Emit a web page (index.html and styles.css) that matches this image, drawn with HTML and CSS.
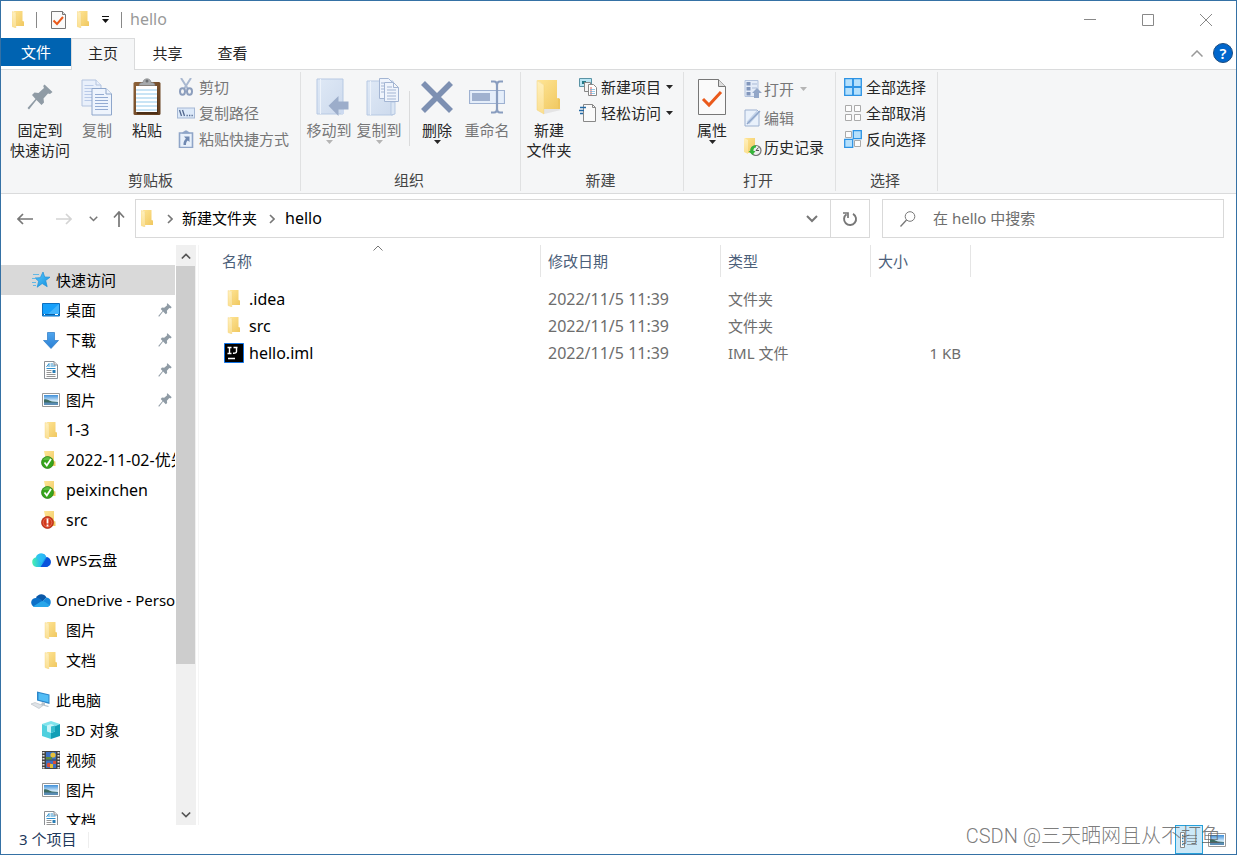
FILE: index.html
```html
<!DOCTYPE html>
<html lang="zh-CN">
<head>
<meta charset="utf-8">
<title>hello</title>
<link rel="stylesheet" href="styles.css">
</head>
<body>
<svg class="sprite" aria-hidden="true">
  <defs>
    <linearGradient id="gFold" x1="0" y1="0" x2="1" y2="1"><stop offset="0" stop-color="#ffe596"/><stop offset="1" stop-color="#f0c860"/></linearGradient>
    <linearGradient id="gFlap" x1="0" y1="0" x2="0" y2="1"><stop offset="0" stop-color="#fff0bd"/><stop offset="1" stop-color="#fbdf90"/></linearGradient>
    <linearGradient id="gBlue" x1="0" y1="0" x2="1" y2="1"><stop offset="0" stop-color="#5cc8fb"/><stop offset="1" stop-color="#1090e0"/></linearGradient>
    <linearGradient id="gDown" x1="0" y1="0" x2="0" y2="1"><stop offset="0" stop-color="#4ea5ee"/><stop offset="1" stop-color="#2b80d4"/></linearGradient>
    <linearGradient id="gBook" x1="0" y1="0" x2="1" y2="1"><stop offset="0" stop-color="#dfe9f6"/><stop offset="1" stop-color="#cddaed"/></linearGradient>
    <linearGradient id="gSky" x1="0" y1="0" x2="0" y2="1"><stop offset="0" stop-color="#3f8fd8"/><stop offset=".6" stop-color="#d4ebfa"/><stop offset="1" stop-color="#e8f4fb"/></linearGradient>
    <linearGradient id="gWood" x1="0" y1="0" x2="1" y2="1"><stop offset="0" stop-color="#8e6239"/><stop offset="1" stop-color="#5f3b1d"/></linearGradient>
    <linearGradient id="gWps" x1="0" y1="0" x2="1" y2="0"><stop offset="0" stop-color="#4bf0b0"/><stop offset=".5" stop-color="#20b5f0"/><stop offset="1" stop-color="#0a50d8"/></linearGradient>
  </defs>
  <symbol id="folder" viewBox="0 0 12 17"><path d="M1 0h9.500v10l1.500.5V15H4V2z" fill="url(#gFold)"/><path d="M0 .5 3.800 2v15L0 15.500z" fill="url(#gFlap)" stroke="#f3d27a" stroke-width=".4"/></symbol>
  <symbol id="bigfolder" viewBox="0 0 26 36"><path d="M1 1h20v18l3 1v10H8V6z" fill="url(#gFold)"/><path d="m22 19 2 1v10h-2z" fill="#eec65e"/><path d="M1 1.500 8 6v29l-7-4z" fill="url(#gFlap)" stroke="#f3d27a" stroke-width=".5"/><path d="m8 35 17-4-2-1H8z" fill="#d8d8d8" opacity=".6"/></symbol>
  <symbol id="prop" viewBox="0 0 28 36"><path d="M.5.5h20l7 7v28H.5z" fill="#fafafa" stroke="#777"/><path d="M20.500.5v7h7" fill="#ddd" stroke="#777"/><path d="m5 20 6 6 12-13" fill="none" stroke="#ea5a1c" stroke-width="3"/></symbol>
  <symbol id="miniprop" viewBox="0 0 15 18"><path d="M.5.500h11l3 3v14H.5z" fill="#fafafa" stroke="#777"/><path d="M11.500.5v3h3" fill="#ddd" stroke="#777"/><path d="m2.500 9.500 3.500 3.500 6-7" fill="none" stroke="#ea5a1c" stroke-width="2"/></symbol>
  <symbol id="pin" viewBox="0 0 26 26"><path d="M17.500.5 25.500 8l-2.500 2-2-.5-4.500 5 .5 4-2.500 2.500L9.500 16 2 25.500.5 24 8.500 15 5 11l2.500-2.500 4 .5 5.500-5-.8-2z" fill="#8f9ba5"/></symbol>
  <symbol id="copy" viewBox="0 0 32 37"><g fill="#e9f0fb" stroke="#b4c4df"><path d="M1 1h14l5 5v21H1z"/><path d="M15 1v5h5"/></g><g stroke="#b9cae8"><path d="M3.500 6.500h9M3.500 9.500h13M3.500 12.500h13M3.500 15.500h13M3.500 18.500h13M3.500 21.500h13"/></g><g fill="#eef4fd" stroke="#8ea6cb"><path d="M11 9.500h14l5.500 5.500v21H11z"/><path d="M25 9.500V15h5.500"/></g><path d="M14 15.500h9M14 18.500h13M14 21.500h13M14 24.500h13M14 27.500h13M14 30.500h13" stroke="#93abd2"/></symbol>
  <symbol id="paste" viewBox="0 0 28 38"><rect x=".5" y="4" width="27" height="33" rx="1.500" fill="url(#gWood)"/><path d="m24 9 1 27H4v-2h20z" fill="#4c2f17"/><path d="M3 8h21v26H3z" fill="#fff"/><path d="M3 12h21M3 16h21M3 20h21M3 24h21M3 28h21M3 32h21" stroke="#b8dcf2" stroke-width="1.300"/><path d="M6 7.500C6 5 8 4.500 10 4.500c0-5 8-5 8 0 2 0 4 .5 4 3z" fill="#a6a9ac" stroke="#7d8082" stroke-width=".6"/><circle cx="14" cy="3" r="1.500" fill="#6c6f71"/></symbol>
  <symbol id="cut" viewBox="0 0 18 18"><path d="m4 0 7 11M14 0 7 11" stroke="#a9b8d0" stroke-width="2"/><g fill="none" stroke="#8c9ebd" stroke-width="2"><ellipse cx="5.500" cy="13.500" rx="2.500" ry="3.200"/><ellipse cx="12.500" cy="13.500" rx="2.500" ry="3.200"/></g></symbol>
  <symbol id="path" viewBox="0 0 18 18"><rect x=".5" y="4" width="17" height="10" fill="#dce9f9" stroke="#a6b8d5"/><path d="m2.500 6 2 6M5.500 6l2 6" stroke="#52688f" stroke-width="1.300"/><path d="M9.500 11.500h1.300M12 11.500h1.300M14.500 11.500h1.300" stroke="#52688f" stroke-width="1.400"/></symbol>
  <symbol id="shortcut" viewBox="0 0 18 18"><path d="M2.500 3h13v14.500h-13z" fill="#e9f1fb" stroke="#8fa5c8" stroke-width="1.600"/><path d="M5 3.500C6 1 7 2 8 .5h2C11 2 12 1 13 3.500z" fill="#8fa5c8"/><path d="M7 6.500h5.500V12l-1.600-1.600c-1.500 1-2 2.500-1.900 4.600H6.500c-.3-3 1-5 2.400-6.200z" fill="#7089b2"/></symbol>
  <symbol id="moveto" viewBox="0 0 33 38"><path d="M1 1h26v35H1z" fill="url(#gBook)" stroke="#b7c9e3"/><path d="M4.500 1v35" stroke="#edf3fb"/><path d="M25 24h3v12h-3z" fill="#cddaf0"/><path d="M22.500 18v5.500H32.500v8h-10V38L12.500 27.800z" fill="#9cadca"/></symbol>
  <symbol id="copyto" viewBox="0 0 33 38"><path d="M1 3h26v34H1z" fill="url(#gBook)" stroke="#b7c9e3"/><path d="M4.500 3v34" stroke="#edf3fb"/><path d="M25 24h4v12l-4 1z" fill="#dbe6f4" stroke="#b7c9e3"/><g fill="#eff4fc" stroke="#a3b5d3"><path d="M13.500.5h9l5 5v15h-14z"/><path d="M18.500 4.500h9l5 5v14h-14zM27.500 4.500v5h5"/></g><path d="M15 5h3M15 8h3M15 11h3M15 14h3M21 9h5M21 12h9M21 15h9M21 18h9M21 21h9" stroke="#a3b5d3"/></symbol>
  <symbol id="del" viewBox="0 0 32 32"><path d="m2 2 28 28M30 2 2 30" stroke="#7d90b2" stroke-width="5.600"/></symbol>
  <symbol id="rename" viewBox="0 0 36 34"><path d="M.5 10.500h35v13H.5z" fill="#e5eefa" stroke="#9eb1d1" stroke-width="1.200"/><path d="M3 13h18v8H3z" fill="#a0b1cf"/><path d="M22 1.500h3q3 0 3 4v23q0 4-3 4h-3M34 1.500h-3q-3 0-3 4v23q0 4 3 4h3" fill="none" stroke="#899dbf" stroke-width="2.200"/></symbol>
  <symbol id="newitem" viewBox="0 0 18 18"><path d="M.5.5h12v8H.5z" fill="#b9e6f5" stroke="#5a93a5"/><path d="M3 3h4v3H3z" fill="#247a88"/><path d="M5.500 4.500h6v9h-6z" fill="#f4f4f4" stroke="#888"/><path d="M9.500 6.500h5l3 3v8h-8z" fill="#fff" stroke="#888"/><path d="M12 9v8" stroke="#e35d54"/><path d="M11 11.500h5M11 13.500h5M11 15.500h5" stroke="#6bb0d8" stroke-width=".7"/></symbol>
  <symbol id="easy" viewBox="0 0 18 18"><path d="M4.500.5h9l3 3v14h-12z" fill="#fafafa" stroke="#888"/><path d="M13.500.5v3h3" fill="none" stroke="#888"/><path d="M1 3.500h6M0 6.500h5M1 9.500h3" stroke="#246aa5" stroke-width="1.300"/></symbol>
  <symbol id="open" viewBox="0 0 18 18"><path d="M1 .5h13v16H1z" fill="#e4ecf8" stroke="#b3c3dd"/><path d="M2.500 2h4v3.500h-4zM2.500 7h4v3.500h-4zM2.500 12h4v3.500h-4z" fill="#8196bb"/><path d="M8 4h5M8 8h5" stroke="#a9bad6"/><path d="m13 8 5 5h-3v5h-5v-5H8z" fill="#93a7c8"/></symbol>
  <symbol id="edit" viewBox="0 0 18 18"><path d="M1 1h12l2 2v14H1z" fill="#e9f1fb" stroke="#9db1d0"/><path d="M4 14 14 3" stroke="#c3d2e8" stroke-width="3.500"/><path d="M3 15 16 2" stroke="#8ea5c9" stroke-width="1.500"/></symbol>
  <symbol id="history" viewBox="0 0 18 18"><path d="M1 0h10v15H4z" fill="url(#gFold)"/><path d="M0 0 4 2v14l-4-2z" fill="url(#gFlap)"/><circle cx="12" cy="12.500" r="5" fill="#eee" stroke="#777" stroke-width="1.200"/><path d="M12 12.500 14.500 9.500M12 12.500h3" stroke="#555"/><path d="M12 7.500c-3.500-.5-6 2-5.500 5.500H4.500l4 4 3-4H9.500c-.3-2 .7-3.300 2.500-3.500z" fill="#35b53a"/></symbol>
  <symbol id="selall" viewBox="0 0 18 18"><g fill="#b5e0fc" stroke="#2d93e4" stroke-width="1.300"><path d="M.7.700h8v8h-8zM9.300.7h8v8h-8zM.7 9.300h8v8h-8zM9.300 9.300h8v8h-8z"/></g></symbol>
  <symbol id="selnone" viewBox="0 0 18 18"><g fill="#fcfcfc" stroke="#aaa"><path d="M1.500 1.500h6v6h-6zM10.500 1.500h6v6h-6zM1.500 10.500h6v6h-6zM10.500 10.500h6v6h-6z"/></g></symbol>
  <symbol id="selinv" viewBox="0 0 18 18"><g fill="#fcfcfc" stroke="#aaa"><path d="M1.500 1.500h6v6h-6zM10.500 10.500h6v6h-6z"/></g><g fill="#b5e0fc" stroke="#2d93e4" stroke-width="1.300"><path d="M9.300.7h8v8h-8zM.7 9.300h8v8h-8z"/></g></symbol>
  <symbol id="star" viewBox="0 0 18 16"><path d="m11 0 1.700 5 5.300.2-4.300 3.300 1.500 6.200-5-3.200-5 3.700 1.500-6L3 6l5.300-.3z" fill="url(#gBlue)" stroke="#1d8fd8" stroke-width=".7"/><path d="M1 2.500h6M0 6.500h4M0 10.500h4M1 13.500h3" stroke="#55b4e8" stroke-width=".9"/></symbol>
  <symbol id="desktop" viewBox="0 0 18 14"><path d="M.5.5h17v12.500H.5z" fill="#16a0fb" stroke="#0c6fc0"/><path d="M17 1v10H6z" fill="#42b4fd"/><path d="M1 11.500h16" stroke="#0b5fa5"/><path d="M2 11.500h1M13 11.500h3" stroke="#fff"/></symbol>
  <symbol id="down" viewBox="0 0 16 17"><path d="M4.500.5h7v8h4L8 16.500.500 8.500h4z" fill="url(#gDown)" stroke="#2a78c4" stroke-width=".7"/></symbol>
  <symbol id="doc" viewBox="0 0 14 18"><path d="M.5.5h9.500l3.500 3.500v13.500H.5z" fill="#fff" stroke="#8b8f94"/><path d="M10 .5V4h3.500" fill="#ddd" stroke="#8b8f94"/><path d="M2.500 6 5 2.500V6M6.500 3h2.500M6.500 5h5M2.500 7.500h9" stroke="#2e8fcc" fill="none"/><path d="M2.500 9.500h5M2.500 11.500h5M2.500 13.500h9M2.500 15.500h9" stroke="#888" stroke-width=".9"/><path d="M8.500 9h3v3h-3z" fill="#297db5"/></symbol>
  <symbol id="pic" viewBox="0 0 18 14"><path d="M.5.5h17v13H.5z" fill="#fff" stroke="#999"/><path d="M2 2h14v10H2z" fill="url(#gSky)"/><path d="M2 6.500c3-1 4 1 8 2l6 .5v1H2z" fill="#3d6b62"/><path d="M2 9.500h14V12H2z" fill="#5b8db5"/></symbol>
  <symbol id="fok" viewBox="0 0 15 18"><path d="M3 0h10v10l1.500.5V15H6z" fill="url(#gFold)"/><circle cx="6.500" cy="11.500" r="6" fill="#37a51c" stroke="#267b12" stroke-width=".7"/><path d="M2 9c2-4 7-4 9 0z" fill="#75cc56" opacity=".6"/><path d="m3.500 11.500 2.300 3L10 8" fill="none" stroke="#fff" stroke-width="1.800"/></symbol>
  <symbol id="fbad" viewBox="0 0 15 18"><path d="M3 0h10v10l1.500.5V15H6z" fill="url(#gFold)"/><circle cx="6.500" cy="11.500" r="6" fill="#d2371b" stroke="#a32812" stroke-width=".7"/><circle cx="6.500" cy="11.500" r="4.300" fill="none" stroke="#e78168" stroke-width=".7"/><path d="M6.500 7.500v5M6.500 13.500v2" stroke="#fff" stroke-width="1.800"/></symbol>
  <symbol id="wps" viewBox="0 0 19 14"><path d="M5 14a5 5 0 0 1-.5-9.800A5.500 5.500 0 0 1 14.800 4 5 5 0 0 1 14 14z" fill="url(#gWps)"/><path d="m9 14 6.500-9.700A5 5 0 0 1 14 14z" fill="#0a52dc"/><path d="M4.500 4.200A5.500 5.500 0 0 1 14.800 4L10 10z" fill="#2fc0fa" opacity=".7"/></symbol>
  <symbol id="onedrive" viewBox="0 0 20 13"><path d="M5 4C7-.8 13-1 15.500 3.500L10 9z" fill="#0a58a8"/><path d="M4 13a4.500 4.500 0 0 1 1.500-9C8 3.500 10 5 12 7L5 13z" fill="#0d70c8"/><path d="M15.500 3.500A4.800 4.800 0 0 1 15.800 13l-5-5z" fill="#1689dc"/><path d="M2 12.500 10 7.500c4-1 5 2 9 3.500-1 1.500-2 2-3.200 2H4q-1.200 0-2-.5z" fill="#28a6ea"/></symbol>
  <symbol id="pc" viewBox="0 0 20 18"><path d="m6 .5 12.500 3V13L6 9.500z" fill="#2c86c9"/><path d="m7.500 2 10 2.300v7l-10-2.500z" fill="#52bdf6"/><path d="m11 11 3 1v2l4 1-1 1-7-2z" fill="#b8c3cc"/><path d="m0 13 4-1.500 8 3-4 3z" fill="#dfe3e7" stroke="#b4bcc2" stroke-width=".6"/></symbol>
  <symbol id="cube" viewBox="0 0 18 18"><path d="m0 3 9-3 9 3-9 4z" fill="#7fe3ec"/><path d="m0 3 9 4v11l-9-3z" fill="#4fd0de"/><path d="m18 3-9 4v11l9-3z" fill="#129fb6"/><path d="m5 4.500 4-1.500 4 1.500v6L9 12l-4-1.500z" fill="#c9f4f8"/><path d="m9 5.500 4-1v6L9 12z" fill="#35bccd"/></symbol>
  <symbol id="video" viewBox="0 0 18 18"><path d="M0 0h18v18H0z" fill="#444"/><path d="M1.500 1v17M16.500 1v17" stroke="#e6e6e6" stroke-width="2" stroke-dasharray="1.500 1.500"/><path d="M4 1h10v7.500H4zM4 9.500h10V17H4z" fill="#3b71c5"/><circle cx="11" cy="4" r="2.600" fill="#e7c13b"/><path d="M4 6h6v2.500H4z" fill="#5f8c3a"/><circle cx="7" cy="14" r="2.300" fill="#d94e38"/><path d="M8 13h3v4H8z" fill="#e0bf34"/><path d="M11 10h3v3h-3z" fill="#d94e38"/></symbol>
  <symbol id="ij" viewBox="0 0 20 20"><path d="M.5.5h19v19H.5z" fill="#000" stroke="#1073e6"/><path d="M3.500 4.500h4M3.500 10.500h4M5.500 4v6M9.500 4.500h4M12.500 4v4.500q0 2-3.500 1.800M4 15.500h7" fill="none" stroke="#fff" stroke-width="1.400"/></symbol>
  <symbol id="caret" viewBox="0 0 7 4"><path d="M0 0h7L3.500 4z" fill="currentColor"/></symbol>
  <symbol id="chev" viewBox="0 0 12 8"><path d="m1 1 5 5 5-5" fill="none" stroke="currentColor" stroke-width="2"/></symbol>
</svg>

<div class="window">
  <header class="titlebar">
    <svg class="i-folder"><use href="#folder"/></svg>
    <span class="tsep"></span>
    <button class="plain qprop" aria-label="属性"><svg class="i-prop"><use href="#miniprop"/></svg></button>
    <button class="plain qnew" aria-label="新建文件夹"><svg class="i-folder"><use href="#folder"/></svg></button>
    <button class="plain qmore" aria-label="自定义快速访问工具栏"><svg width="7" height="8" viewBox="0 0 7 8"><path d="M0 .5h7" stroke="#111"/><path d="M0 3h7L3.500 7z" fill="#111"/></svg></button>
    <span class="tsep"></span>
    <h1 class="title">hello</h1>
    <div class="winbtns">
      <button class="plain" aria-label="最小化"><svg width="12" height="12"><path d="M0 5.500h12" stroke="#888"/></svg></button>
      <button class="plain" aria-label="最大化"><svg width="12" height="12"><path d="M.5.5h11v11H.5z" fill="none" stroke="#888"/></svg></button>
      <button class="plain" aria-label="关闭"><svg width="12" height="12"><path d="m0 0 12 12M12 0 0 12" stroke="#888"/></svg></button>
    </div>
  </header>

  <nav class="tabs">
    <button class="tab file">文件</button>
    <button class="tab active">主页</button>
    <button class="tab">共享</button>
    <button class="tab">查看</button>
    <div class="tabtools">
      <button class="plain" aria-label="折叠功能区"><svg width="12" height="7"><path d="m.5 6.500 5.500-5.500 5.500 5.500" fill="none" stroke="#999" stroke-width="1.500"/></svg></button>
      <button class="plain help" aria-label="帮助">?</button>
    </div>
  </nav>

  <section class="ribbon">
    <div class="group clip">
      <div class="tools">
        <button class="big wide"><span class="pict"><svg width="26" height="26"><use href="#pin"/></svg></span>固定到<br>快速访问</button>
        <button class="big off"><span class="pict"><svg width="32" height="37"><use href="#copy"/></svg></span>复制</button>
        <button class="big"><span class="pict"><svg width="28" height="38"><use href="#paste"/></svg></span>粘贴</button>
        <div class="col">
          <button class="small off"><svg><use href="#cut"/></svg>剪切</button>
          <button class="small off"><svg><use href="#path"/></svg>复制路径</button>
          <button class="small off"><svg><use href="#shortcut"/></svg>粘贴快捷方式</button>
        </div>
      </div>
      <div class="glabel">剪贴板</div>
    </div>
    <div class="group org">
      <div class="tools">
        <button class="big off"><span class="pict book"><svg width="33" height="38"><use href="#moveto"/></svg></span>移动到<svg class="caret"><use href="#caret"/></svg></button>
        <button class="big off"><span class="pict book"><svg width="33" height="38"><use href="#copyto"/></svg></span>复制到<svg class="caret"><use href="#caret"/></svg></button>
        <span class="bar"></span>
        <button class="big"><span class="pict"><svg width="32" height="32"><use href="#del"/></svg></span>删除<svg class="caret"><use href="#caret"/></svg></button>
        <button class="big off"><span class="pict"><svg width="36" height="34"><use href="#rename"/></svg></span>重命名</button>
      </div>
      <div class="glabel">组织</div>
    </div>
    <div class="group new">
      <div class="tools">
        <button class="big"><span class="pict"><svg width="26" height="36"><use href="#bigfolder"/></svg></span>新建<br>文件夹</button>
        <div class="col">
          <button class="small"><svg><use href="#newitem"/></svg>新建项目<svg class="caret"><use href="#caret"/></svg></button>
          <button class="small"><svg><use href="#easy"/></svg>轻松访问<svg class="caret"><use href="#caret"/></svg></button>
        </div>
      </div>
      <div class="glabel">新建</div>
    </div>
    <div class="group openg">
      <div class="tools">
        <button class="big"><span class="pict"><svg width="28" height="36"><use href="#prop"/></svg></span>属性<svg class="caret"><use href="#caret"/></svg></button>
        <div class="col loose">
          <button class="small off"><svg><use href="#open"/></svg>打开<svg class="caret"><use href="#caret"/></svg></button>
          <button class="small off"><svg><use href="#edit"/></svg>编辑</button>
          <button class="small"><svg><use href="#history"/></svg>历史记录</button>
        </div>
      </div>
      <div class="glabel">打开</div>
    </div>
    <div class="group sel">
      <div class="tools">
        <div class="col">
          <button class="small"><svg><use href="#selall"/></svg>全部选择</button>
          <button class="small"><svg><use href="#selnone"/></svg>全部取消</button>
          <button class="small"><svg><use href="#selinv"/></svg>反向选择</button>
        </div>
      </div>
      <div class="glabel">选择</div>
    </div>
  </section>

  <div class="addressrow">
    <div class="nav">
      <button class="plain" aria-label="后退"><svg width="16" height="12"><path d="M1 6h15M6 1 1 6l5 5" fill="none" stroke="#777" stroke-width="1.700"/></svg></button>
      <button class="plain" aria-label="前进"><svg width="16" height="12"><path d="M0 6h15M10 1l5 5-5 5" fill="none" stroke="#d4d4d4" stroke-width="1.700"/></svg></button>
      <button class="plain" aria-label="最近位置"><svg width="9" height="6"><use href="#chev"/></svg></button>
      <button class="plain" aria-label="向上"><svg width="12" height="16"><path d="M6 16V1M1 6.500 6 1l5 5.500" fill="none" stroke="#777" stroke-width="1.700"/></svg></button>
    </div>
    <div class="address">
      <svg class="i-folder"><use href="#folder"/></svg>
      <svg class="crumb" width="6" height="10"><path d="m1 1 4 4-4 4" fill="none" stroke="#777" stroke-width="1.600"/></svg>
      <a href="#">新建文件夹</a>
      <svg class="crumb" width="6" height="10"><path d="m1 1 4 4-4 4" fill="none" stroke="#777" stroke-width="1.600"/></svg>
      <a class="latin" href="#">hello</a>
      <button class="plain drop" aria-label="以前的位置"><svg width="12" height="8"><use href="#chev"/></svg></button>
      <button class="plain refresh" aria-label="刷新"><svg width="16" height="16"><path d="M4.500 3.200a6 6 0 1 0 6.500-.4" fill="none" stroke="#777" stroke-width="1.900"/><path d="M1 2h5v5" fill="none" stroke="#777" stroke-width="1.700"/></svg></button>
    </div>
    <label class="search"><svg width="16" height="16"><circle cx="10" cy="5.500" r="4.800" fill="none" stroke="#777"/><path d="M6.500 9 .500 15.500" stroke="#777" stroke-width="1.300"/></svg><input type="text" placeholder="在 hello 中搜索" aria-label="搜索"></label>
  </div>

  <main class="content">
    <nav class="tree">
      <a class="top on" href="#"><svg class="root" width="18" height="16"><use href="#star"/></svg>快速访问</a>
      <a href="#"><svg width="18" height="14"><use href="#desktop"/></svg><span>桌面</span><svg class="tpin"><use href="#pin"/></svg></a>
      <a href="#"><svg width="18" height="17"><use href="#down"/></svg><span>下载</span><svg class="tpin"><use href="#pin"/></svg></a>
      <a href="#"><svg width="18" height="18"><use href="#doc"/></svg><span>文档</span><svg class="tpin"><use href="#pin"/></svg></a>
      <a href="#"><svg width="18" height="14"><use href="#pic"/></svg><span>图片</span><svg class="tpin"><use href="#pin"/></svg></a>
      <a class="latin" href="#"><svg width="18" height="17"><use href="#folder"/></svg><span>1-3</span></a>
      <a class="latin" href="#"><svg class="ov" width="18" height="18"><use href="#fok"/></svg><span>2022-11-02-优先级</span></a>
      <a class="latin" href="#"><svg class="ov" width="18" height="18"><use href="#fok"/></svg><span>peixinchen</span></a>
      <a class="latin" href="#"><svg class="ov" width="18" height="18"><use href="#fbad"/></svg><span>src</span></a>
      <a class="top gap" href="#"><svg class="root" width="19" height="14"><use href="#wps"/></svg>WPS云盘</a>
      <a class="top gap" href="#"><svg class="root" width="20" height="13"><use href="#onedrive"/></svg>OneDrive - Personal</a>
      <a href="#"><svg width="18" height="17"><use href="#folder"/></svg><span>图片</span></a>
      <a href="#"><svg width="18" height="17"><use href="#folder"/></svg><span>文档</span></a>
      <a class="top gap" href="#"><svg class="root" width="20" height="18"><use href="#pc"/></svg>此电脑</a>
      <a href="#"><svg width="18" height="18"><use href="#cube"/></svg><span>3D 对象</span></a>
      <a href="#"><svg width="18" height="18"><use href="#video"/></svg><span>视频</span></a>
      <a href="#"><svg width="18" height="14"><use href="#pic"/></svg><span>图片</span></a>
      <a href="#"><svg width="18" height="18"><use href="#doc"/></svg><span>文档</span></a>
    </nav>
    <div class="scroll">
      <button class="plain up" aria-label="向上滚动"><svg width="10" height="8"><use href="#chev"/></svg></button>
      <div class="thumb"></div>
      <div class="rest"></div>
      <button class="plain" aria-label="向下滚动"><svg width="10" height="8"><use href="#chev"/></svg></button>
    </div>
    <div class="files">
      <table>
        <colgroup><col class="c1"><col class="c2"><col class="c3"><col class="c4"></colgroup>
        <thead><tr><th class="name">名称<svg class="sort" width="10" height="6"><path d="m.5 5.500 4.500-4.500 4.500 4.500" fill="none" stroke="#777"/></svg></th><th>修改日期</th><th>类型</th><th>大小</th></tr></thead>
        <tbody>
          <tr><td class="name latin"><div class="cell"><svg width="20" height="17"><use href="#folder"/></svg>.idea</div></td><td class="latin">2022/11/5 11:39</td><td>文件夹</td><td></td></tr>
          <tr><td class="name latin"><div class="cell"><svg width="20" height="17"><use href="#folder"/></svg>src</div></td><td class="latin">2022/11/5 11:39</td><td>文件夹</td><td></td></tr>
          <tr><td class="name latin"><div class="cell"><svg width="20" height="20"><use href="#ij"/></svg>hello.iml</div></td><td class="latin">2022/11/5 11:39</td><td>IML 文件</td><td class="num">1 KB</td></tr>
        </tbody>
      </table>
    </div>
  </main>

  <footer class="status">
    <span class="count">3 个项目</span>
    <button class="plain view on" aria-label="详细信息"><svg width="18" height="16"><path d="M.5.5h4v15h-4z" fill="#fff" stroke="#888"/><path d="M2 3.500h1.500M2 6.500h1.500M2 9.500h1.500M2 12.500h1.500" stroke="#2c7fb0" stroke-width="1.500"/><path d="M7 3.500h10M7 6.500h10M7 9.500h10M7 12.500h10" stroke="#8d9ba5"/></svg></button>
    <button class="plain view" aria-label="大图标"><svg width="18" height="14"><use href="#pic"/></svg></button>
    <span class="mark">CSDN @三天晒网且从不打鱼</span>
  </footer>
</div>
</body>
</html>
```
FILE: styles.css
```css
* { box-sizing: border-box; }
body {
  margin: 0;
  font: 15px/20px "Noto Sans", "Noto Sans CJK SC", sans-serif;
  color: #000;
}
button { font: inherit; color: inherit; }
a { color: inherit; text-decoration: none; }
svg { display: block; flex: none; }
.sprite { position: absolute; width: 0; height: 0; }
.latin { font-size: 16px; }
.plain {
  display: flex;
  align-items: center;
  justify-content: center;
  padding: 0;
  border: 0;
  background: none;
}
.window {
  display: flex;
  flex-direction: column;
  height: 100vh;
  border: 1px solid #3571a5;
  background: #fff;
  overflow: hidden;
}
.i-folder { width: 12px; height: 17px; }
.i-prop { width: 15px; height: 18px; }

.titlebar { display: flex; align-items: center; height: 37px; padding-left: 11px; flex: none; }
.tsep { width: 1px; height: 16px; background: #888; margin-left: 12px; }
.qprop { margin-left: 14px; }
.qnew { margin-left: 11px; }
.qmore { margin-left: 13px; }
.title { margin: 0 0 0 8px; padding-bottom: 1px; font-size: 16px; font-weight: 400; color: #999; }
.winbtns { display: flex; margin-left: auto; align-self: stretch; padding-right: 1px; }
.winbtns button { width: 58px; }

.tabs { display: flex; height: 32px; flex: none; box-shadow: inset 0 -1px #dadbdc; }
.tab { width: 65px; padding: 0 0 2px; border: 0; background: #fff; color: #262626; border-bottom: 1px solid #dadbdc; }
.tab.file { width: 70px; height: 28px; padding: 0; background: #0063b1; color: #fff; border: 0; }
.tab.active { width: 64px; border: 1px solid #dadbdc; border-bottom: 0; padding-bottom: 3px; background: #f5f6f7; }
.tabtools { display: flex; align-items: center; gap: 10px; margin-left: auto; padding: 0 3px 2px 0; }
.help { width: 20px; height: 20px; border-radius: 50%; background: #0066cc; border: 1px solid #1b4c80; color: #fff; font-weight: 600; }

.ribbon { display: flex; background: #f5f6f7; border-bottom: 1px solid #dadbdc; padding: 2px 0; flex: none; }
.group { display: flex; flex-direction: column; height: 119px; border-right: 1px solid #e0e1e2; padding-top: 4px; color: #262626; }
.group.clip { width: 300px; }
.group.org { width: 220px; }
.group.new { width: 163px; }
.group.openg { width: 152px; }
.group.sel { width: 102px; }
.tools { display: flex; gap: 4px; flex: 1; padding-left: 5px; }
.clip .tools { padding-left: 9px; }
.glabel { color: #444; text-align: center; margin-bottom: 1px; padding-right: 3px; }
.clip .glabel { padding-right: 0; }
.big { width: 46px; padding: 0; border: 0; background: none; display: block; white-space: nowrap; align-self: flex-start; }
.big.wide { width: 60px; }
.pict { display: flex; align-items: center; justify-content: center; height: 44px; padding-bottom: 2px; }
.pict.book { padding-left: 7px; }
.off { color: #777; }
.caret { width: 7px; height: 4px; color: #262626; }
.off .caret { color: #b5b5b5; }
.big .caret { margin: 0 auto; }
.bar { width: 1px; height: 55px; margin: 15px 0 0 3px; background: #dadbdc; }
.col { display: flex; flex-direction: column; align-items: flex-start; margin-top: -2px; padding-left: 3px; }
.small { display: flex; align-items: center; gap: 4px; height: 26px; padding: 0; border: 0; background: none; white-space: nowrap; }
.small > svg:not(.caret) { width: 18px; height: 18px; }
.small .caret { margin-left: 1px; }
.loose { padding-left: 5px; }
.loose .small { height: 29px; gap: 2px; }
.loose .caret { margin-left: 4px; }

.addressrow { display: flex; padding: 5px 12px 7px 0; flex: none; }
.nav { width: 134px; display: flex; align-items: center; padding-left: 16px; color: #777; }
.nav button:nth-child(2) { margin-left: 23px; }
.nav button:nth-child(3) { margin-left: 17px; }
.nav button:nth-child(4) { margin-left: 15px; }
.address { display: flex; align-items: center; flex: 1; height: 39px; border: 1px solid #d9d9d9; padding-left: 5px; }
.address a { padding-bottom: 2px; }
.address .crumb { margin: 0 9px 0 14px; }
.address .crumb ~ .crumb { margin: 0 10px 0 12px; }
.drop { margin-left: auto; width: 37px; align-self: stretch; color: #777; }
.refresh { width: 39px; align-self: stretch; border-left: 1px solid #d9d9d9; }
.search { display: flex; align-items: center; width: 342px; margin-left: 12px; border: 1px solid #d9d9d9; padding-left: 17px; gap: 17px; }
.search input { flex: 1; min-width: 0; border: 0; padding: 0 0 2px; outline: 0; font: inherit; background: none; }
.search input::placeholder { color: #6d6d6d; opacity: 1; }

.content { display: flex; flex: 1; min-height: 0; }
.tree { width: 174px; padding-top: 20px; overflow: hidden; flex: none; }
.tree a { display: flex; align-items: center; height: 30px; padding-left: 41px; gap: 6px; white-space: nowrap; }
.tree a.top { padding-left: 30px; gap: 5px; }
.tree a.on { background: #d9d9d9; }
.tree a.gap { margin-top: 10px; }
.tree .root { width: 20px; }
.tree .ov { width: 15px; margin: 0 4px 0 -1px; }
.tree .tpin { width: 14px; height: 14px; margin-left: auto; margin-right: 3px; }
.scroll { display: flex; flex-direction: column; width: 20px; margin-left: 1px; background: #f0f0f0; flex: none; color: #555; }
.scroll button { height: 21px; }
.scroll .up svg { transform: rotate(180deg); }
.thumb { flex: 398; margin-right: 1px; background: #cdcdcd; }
.rest { flex: 140; }
.files { flex: 1; margin-left: 2px; border-left: 1px solid #f5f5f5; }
table { width: 772px; table-layout: fixed; border-collapse: separate; border-spacing: 0; }
.c1 { width: 342px; }
.c2 { width: 180px; }
.c3 { width: 150px; }
.c4 { width: 100px; }
th { position: relative; height: 32px; padding: 0 7px; border-right: 1px solid #e5e5e5; text-align: left; font-weight: 400; color: #4c607a; }
th.name { padding-left: 23px; }
.sort { position: absolute; left: 51%; top: 0; }
tbody::before { content: ""; display: block; height: 8px; }
td { height: 27px; padding: 0 7px; color: #6d6d6d; }
td.name { padding-left: 25px; color: #000; }
td.num { text-align: right; padding-right: 10px; }
.cell { display: flex; align-items: center; gap: 5px; }

.status { position: relative; display: flex; align-items: center; height: 29px; flex: none; color: #1e395b; padding-right: 5px; }
.count { padding: 0 12px 2px 18px; border-right: 1px solid #eee; line-height: 14px; margin-right: auto; }
.view { width: 28px; height: 29px; }
.view.on { background: #cce8f7; border: 1px solid #26a0da; }
.mark { position: absolute; right: 15px; bottom: 6px; font: 300 20px/24px Roboto, "Noto Sans CJK SC", sans-serif; color: rgba(90, 90, 90, .8); }
```
